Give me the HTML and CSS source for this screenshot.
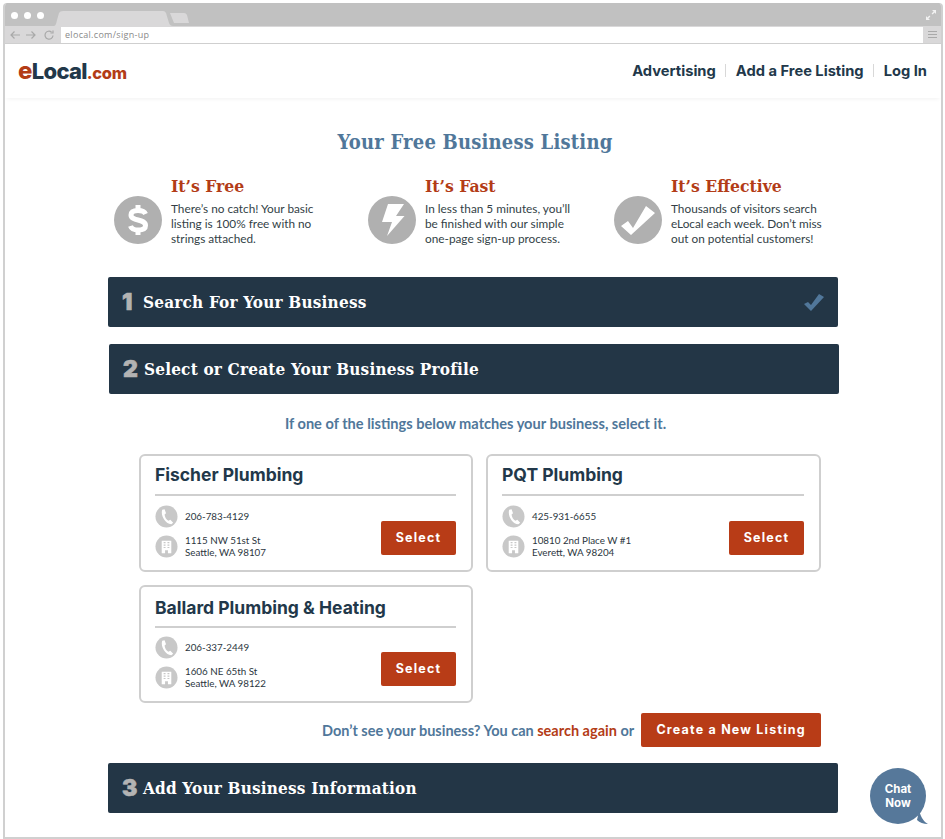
FILE: index.html
```html
<!DOCTYPE html>
<html lang="en">
<head>
<meta charset="utf-8">
<title>Your Free Business Listing</title>
<link rel="stylesheet" href="styles.css">
</head>
<body>
<div class="window">
  <div class="tabbar">
    <div class="dots"><span class="dot"></span><span class="dot"></span><span class="dot"></span></div>
    <svg class="tabs" width="140" height="23" viewBox="0 0 140 23"><path d="M0 23 C3 23 3 21 4 17 L6 10 Q7 8 10 8 L110 8 Q112 8 113 10 L116 20 Q117 23 120 23 Z" fill="#d9d8d9"/><path d="M117 10 L131 10 Q133 10 134 12 L136 20 L121 20 Z" fill="#d9d8d9"/></svg>
    <svg class="expand" width="12" height="12" viewBox="0 0 12 12"><path d="M7 1 H11 V5 L9.6 3.4 L7.6 5.4 L6.6 4.4 L8.6 2.4 Z M5 11 H1 V7 L2.4 8.6 L4.4 6.6 L5.4 7.6 L3.4 9.6 Z" fill="#f2f2f2"/></svg>
  </div>
  <div class="toolbar">
    <svg class="navicons" width="50" height="12" viewBox="0 0 50 12" fill="none" stroke="#a9a9a9" stroke-width="1.2"><path d="M1 6 H10 M4.5 2.5 L1 6 L4.5 9.5"/><path d="M16 6 H25 M21.5 2.5 L25 6 L21.5 9.5"/><path d="M41.5 3 A4 4 0 1 0 43 6.5 M43 1.6 V4 H40.5"/></svg>
    <div class="address">elocal.com/sign-up</div>
    <div class="menu"><span></span><span></span><span></span></div>
  </div>
  <header class="site-header">
    <a class="logo"><span class="logo-e">e</span>Local<span class="logo-com">.com</span></a>
    <nav class="nav">
      <a>Advertising</a><span class="sep"></span><a>Add a Free Listing</a><span class="sep"></span><a>Log In</a>
    </nav>
  </header>
  <main class="content">
    <h1 class="page-title">Your Free Business Listing</h1>
    <section class="features">
      <div class="feature">
        <svg class="feature-icon" viewBox="0 0 48 48"><circle cx="24" cy="24" r="24" fill="#b0b0b0"/><path d="M31.5 18 C30.5 15.5 28 14.5 24 14.5 C19.5 14.5 17 16 17 19 C17 25.5 31.5 22.5 31.5 29.5 C31.5 32.5 28.5 34 24 34 C20 34 17.5 33 16.5 30" fill="none" stroke="#fff" stroke-width="5"/><path d="M24 9 V15 M24 33 V39" stroke="#fff" stroke-width="5"/></svg>
        <div class="feature-text">
          <h2>It’s Free</h2>
          <p>There’s no catch! Your basic<br>listing is 100% free with no<br>strings attached.</p>
        </div>
      </div>
      <div class="feature">
        <svg class="feature-icon" viewBox="0 0 48 48"><circle cx="24" cy="24" r="24" fill="#b0b0b0"/><path d="M20 8 H36 L28 20 H36.5 L19 40 L24 26 H14 Z" fill="#fff"/></svg>
        <div class="feature-text">
          <h2>It’s Fast</h2>
          <p>In less than 5 minutes, you’ll<br>be finished with our simple<br>one-page sign-up process.</p>
        </div>
      </div>
      <div class="feature">
        <svg class="feature-icon" viewBox="0 0 48 48"><circle cx="24" cy="24" r="24" fill="#b0b0b0"/><path d="M7 30 L14 25 L19 32 L32 10 L41 17 L17 39 Z" fill="#fff"/></svg>
        <div class="feature-text">
          <h2>It’s Effective</h2>
          <p>Thousands of visitors search<br>eLocal each week. Don’t miss<br>out on potential customers!</p>
        </div>
      </div>
    </section>

    <div class="step step-first">
      <span class="step-num">1</span><span class="step-title">Search For Your Business</span>
      <svg class="step-check" width="22" height="19" viewBox="0 0 22 19"><path d="M1 11 L5 9 L8 12 L16 1 L21 4 L8 18 Z" fill="#51779a"/></svg>
    </div>
    <div class="step step-shift">
      <span class="step-num">2</span><span class="step-title">Select or Create Your Business Profile</span>
    </div>

    <p class="hint">If one of the listings below matches your business, select it.</p>

    <section class="cards">
      <article class="card">
        <h3>Fischer Plumbing</h3>
        <div class="card-body">
          <div class="contact">
            <div class="contact-row">
              <svg class="cicon" viewBox="0 0 24 24"><circle cx="12" cy="12" r="11.5" fill="#c8c8c8"/><path d="M7.5 5 L10 4.5 L11.5 8.5 L10 10 C10 12.5 12 15.5 14 16.5 L16 15.5 L19 18.5 L17 20 C11 20 5.5 11 7.5 5 Z" fill="#fff"/></svg>
              <span>206-783-4129</span>
            </div>
            <div class="contact-row">
              <svg class="cicon" viewBox="0 0 24 24"><circle cx="12" cy="12" r="11.5" fill="#c8c8c8"/><path d="M7 6 H17 V19 H13.5 V16 H10.5 V19 H7 Z" fill="#fff"/><path d="M9 8 H11 M13 8 H15 M9 10.5 H11 M13 10.5 H15 M9 13 H11 M13 13 H15" stroke="#c8c8c8" stroke-width="1.2"/></svg>
              <span>1115 NW 51st St<br>Seattle, WA 98107</span>
            </div>
          </div>
          <a class="btn">Select</a>
        </div>
      </article>
      <article class="card">
        <h3>PQT Plumbing</h3>
        <div class="card-body">
          <div class="contact">
            <div class="contact-row">
              <svg class="cicon" viewBox="0 0 24 24"><circle cx="12" cy="12" r="11.5" fill="#c8c8c8"/><path d="M7.5 5 L10 4.5 L11.5 8.5 L10 10 C10 12.5 12 15.5 14 16.5 L16 15.5 L19 18.5 L17 20 C11 20 5.5 11 7.5 5 Z" fill="#fff"/></svg>
              <span>425-931-6655</span>
            </div>
            <div class="contact-row">
              <svg class="cicon" viewBox="0 0 24 24"><circle cx="12" cy="12" r="11.5" fill="#c8c8c8"/><path d="M7 6 H17 V19 H13.5 V16 H10.5 V19 H7 Z" fill="#fff"/><path d="M9 8 H11 M13 8 H15 M9 10.5 H11 M13 10.5 H15 M9 13 H11 M13 13 H15" stroke="#c8c8c8" stroke-width="1.2"/></svg>
              <span>10810 2nd Place W #1<br>Everett, WA 98204</span>
            </div>
          </div>
          <a class="btn">Select</a>
        </div>
      </article>
      <article class="card card-low">
        <h3>Ballard Plumbing &amp; Heating</h3>
        <div class="card-body">
          <div class="contact">
            <div class="contact-row">
              <svg class="cicon" viewBox="0 0 24 24"><circle cx="12" cy="12" r="11.5" fill="#c8c8c8"/><path d="M7.5 5 L10 4.5 L11.5 8.5 L10 10 C10 12.5 12 15.5 14 16.5 L16 15.5 L19 18.5 L17 20 C11 20 5.5 11 7.5 5 Z" fill="#fff"/></svg>
              <span>206-337-2449</span>
            </div>
            <div class="contact-row">
              <svg class="cicon" viewBox="0 0 24 24"><circle cx="12" cy="12" r="11.5" fill="#c8c8c8"/><path d="M7 6 H17 V19 H13.5 V16 H10.5 V19 H7 Z" fill="#fff"/><path d="M9 8 H11 M13 8 H15 M9 10.5 H11 M13 10.5 H15 M9 13 H11 M13 13 H15" stroke="#c8c8c8" stroke-width="1.2"/></svg>
              <span>1606 NE 65th St<br>Seattle, WA 98122</span>
            </div>
          </div>
          <a class="btn">Select</a>
        </div>
      </article>
    </section>

    <div class="create-row">
      <span class="create-text">Don’t see your business? You can <a>search again</a> or</span>
      <a class="btn btn-wide">Create a New Listing</a>
    </div>

    <div class="step step-last">
      <span class="step-num">3</span><span class="step-title">Add Your Business Information</span>
    </div>
  </main>
  <div class="chat">
    Chat<br>Now
    <svg class="chat-tail" width="12" height="14" viewBox="0 0 12 14"><path d="M2 0 L4 5 Q6 10 11 13 Q4 13 0 9 Z" fill="#56789a"/></svg>
  </div>
</div>
</body>
</html>
```
FILE: styles.css
```css
* { box-sizing: border-box; }
html, body { margin: 0; padding: 0; }
body {
  width: 945px;
  height: 839px;
  overflow: hidden;
  background: #fff;
  font-family: Lato, "Open Sans", sans-serif;
  color: #333f47;
}
a { color: inherit; text-decoration: none; }
.window {
  position: relative;
  margin: 3px 2px 0 3px;
  height: 836px;
  border: 2px solid #d0d0d0;
  border-top: 0;
  border-radius: 4px 4px 0 0;
  overflow: hidden;
  background: #fff;
}
.tabbar {
  height: 23px;
  background: #c1c1c1;
  display: flex;
  align-items: center;
  padding: 0 4px 0 6px;
}
.dots { display: flex; gap: 6px; width: 42px; flex: none; margin-top: 1px; }
.dot { width: 7px; height: 7px; border-radius: 50%; background: #fff; }
.tabs { align-self: flex-end; flex: none; }
.expand { margin-left: auto; }
.toolbar {
  height: 18px;
  background: #d9d8d9;
  display: flex;
  align-items: center;
  border-bottom: 1px solid #cfcfcf;
}
.navicons { flex: none; margin: 0 1px 0 5px; }
.address {
  width: 862px;
  height: 16px;
  background: #fff;
  font-size: 9px;
  line-height: 16px;
  padding-left: 4px;
  letter-spacing: .3px;
  color: #8a8a8a;
  font-family: "Open Sans", sans-serif;
}
.menu { display: flex; flex-direction: column; gap: 2px; width: 9px; margin-left: 5px; }
.menu span { height: 1px; background: #a9a9a9; }
.site-header {
  height: 54px;
  display: flex;
  align-items: center;
  justify-content: space-between;
  padding: 0 14px 1px 13px;
  box-shadow: 0 3px 4px -2px rgba(0,0,0,.06);
}
.logo {
  font-family: Inter, sans-serif;
  font-weight: 800;
  font-size: 22px;
  letter-spacing: -.7px;
  color: #22384a;
}
.logo-e { color: #b33c17; font-size: 24px; }
.logo-com { color: #b33c17; font-size: 16.5px; letter-spacing: -.3px; }
.nav {
  display: flex;
  align-items: center;
  font-family: Inter, sans-serif;
  font-weight: 700;
  font-size: 14.7px;
  color: #22384a;
}
.sep { width: 1px; height: 13px; background: #d8d8d8; margin: 0 9.5px; }
.content { padding: 0 0 0 103px; }
.page-title {
  margin: 31px 0 0;
  width: 734px;
  text-align: center;
  font-family: "DejaVu Serif Condensed", "DejaVu Serif", serif;
  font-weight: 700;
  font-size: 20px;
  line-height: 26px;
  letter-spacing: .2px;
  color: #50779a;
}
.features {
  display: grid;
  grid-template-columns: 254px 246px 240px;
  margin: 20px 0 0 6px;
}
.feature { display: flex; gap: 9px; }
.feature-icon { width: 48px; height: 48px; flex: none; margin-top: 21px; }
.feature-text h2 {
  margin: 0;
  font-family: "DejaVu Serif Condensed", "DejaVu Serif", serif;
  font-weight: 700;
  font-size: 17.4px;
  line-height: 22px;
  color: #b33c17;
}
.feature-text p {
  margin: 4px 0 0;
  font-size: 11.8px;
  line-height: 15px;
  color: #333f47;
}
.step {
  position: relative;
  width: 730px;
  height: 50px;
  display: flex;
  align-items: center;
  background: #233646;
  border-radius: 2px;
  padding-left: 14px;
}
.step-first { margin-top: 31px; }
.step-shift { margin: 17px 0 0 1px; }
.step-last { margin-top: 16px; }
.step-num {
  font-family: Inter, sans-serif;
  font-weight: 900;
  font-size: 23px;
  color: #b3b3b3;
  width: 21px;
  -webkit-text-stroke: .6px #b3b3b3;
}
.step-title {
  font-family: "DejaVu Serif Condensed", "DejaVu Serif", serif;
  font-weight: 700;
  font-size: 17px;
  letter-spacing: .2px;
  color: #fff;
}
.step-check { position: absolute; right: 13px; top: 16px; }
.hint {
  margin: 22px 0 0;
  width: 735px;
  text-align: center;
  font-size: 14.6px;
  font-weight: 700;
  line-height: 16px;
  color: #50779a;
}
.cards {
  display: grid;
  grid-template-columns: 334px 335px;
  grid-auto-rows: 118px;
  gap: 13px;
  margin: 22px 0 0 31px;
}
.card {
  border: 2px solid #cfcfcf;
  border-radius: 6px;
  padding: 0 15px 0 14px;
  background: #fff;
}
.card h3 {
  margin: 0;
  height: 40px;
  border-bottom: 2px solid #cfcfcf;
  font-family: Inter, sans-serif;
  font-weight: 700;
  font-size: 17.5px;
  line-height: 38px;
  color: #22384a;
}
.card-low h3 { height: 41px; line-height: 41px; }
.card-low .card-body { padding-top: 8px; }
.card-body {
  display: flex;
  align-items: flex-end;
  justify-content: space-between;
  padding-top: 9px;
}
.contact { display: flex; flex-direction: column; gap: 7px; }
.contact-row {
  display: flex;
  align-items: center;
  gap: 7px;
  font-size: 9.8px;
  line-height: 11.5px;
  color: #2b363e;
  font-family: Lato, sans-serif;
}
.cicon { width: 23px; height: 23px; flex: none; }
.btn {
  display: block;
  background: #b83c17;
  color: #fff;
  border-radius: 2px;
  width: 75px;
  height: 34px;
  margin-bottom: 3px;
  text-align: center;
  font-family: Inter, sans-serif;
  font-weight: 700;
  font-size: 12.5px;
  line-height: 34px;
  letter-spacing: 1.2px;
}
.create-row {
  display: flex;
  align-items: center;
  gap: 7px;
  margin: 10px 0 0 214px;
}
.create-text {
  font-size: 14.5px;
  font-weight: 700;
  color: #50779a;
}
.create-text a { color: #b33c17; }
.btn-wide { width: 180px; margin-bottom: 0; }
.chat {
  position: absolute;
  left: 865px;
  top: 765px;
  width: 56px;
  height: 56px;
  border-radius: 50%;
  background: #56789a;
  color: #fff;
  text-align: center;
  font-family: Inter, sans-serif;
  font-weight: 700;
  font-size: 11.5px;
  line-height: 13.5px;
  padding-top: 15px;
}
.chat-tail { position: absolute; left: 47px; top: 43px; }
```
